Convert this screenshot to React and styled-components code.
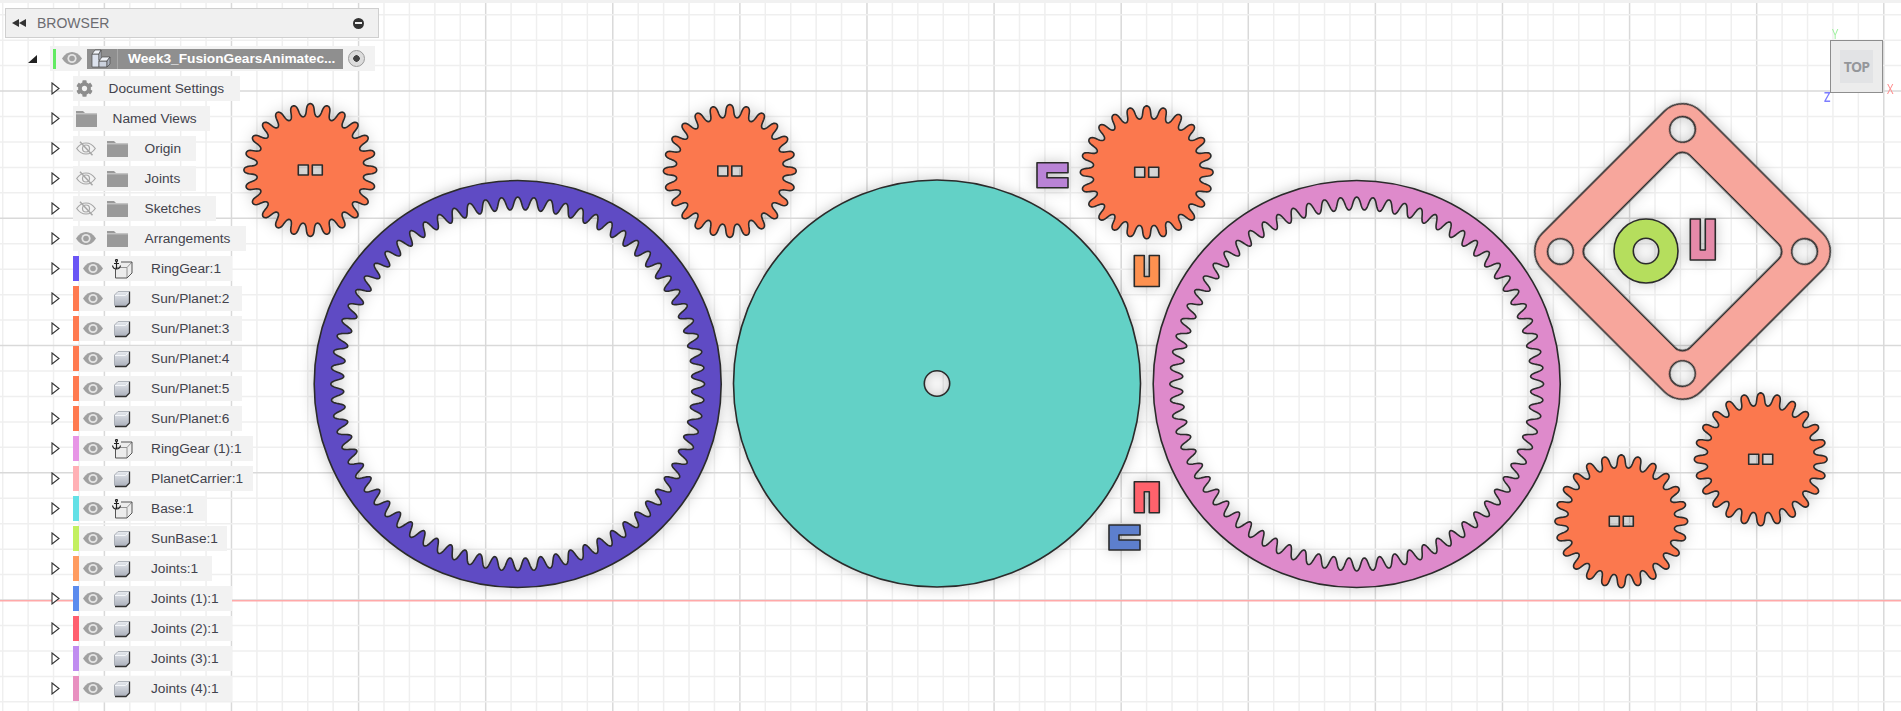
import React from "react";
import styled, { createGlobalStyle } from "styled-components";
import { FaCog } from "react-icons/fa";

const GlobalStyle = createGlobalStyle`
  html, body {
    margin: 0;
    padding: 0;
    background: #fff;
    overflow: hidden;
  }
`;

// tooth outline in polar coords, the warp makes the flanks steeper than a plain sine
function teethPath(cx, cy, mid, amp, teeth, warp = 0.55) {
  const pts = [];
  const steps = teeth * 24;
  for (let i = 0; i < steps; i++) {
    const phi = (i / steps) * Math.PI * 2 * teeth;
    const theta = (phi + warp * Math.sin(2 * phi) * 0.5) / teeth - Math.PI / 2;
    const r = mid + amp * Math.cos(phi);
    pts.push(`${(cx + r * Math.cos(theta)).toFixed(2)} ${(cy + r * Math.sin(theta)).toFixed(2)}`);
  }
  return `M${pts.join("L")}Z`;
}

const circlePath = (cx, cy, r) =>
  `M${cx - r} ${cy}A${r} ${r} 0 1 0 ${cx + r} ${cy}A${r} ${r} 0 1 0 ${cx - r} ${cy}Z`;

const rectPath = (x, y, w, h) => `M${x} ${y}H${x + w}V${y + h}H${x}Z`;

const roundSquare = (h, r) =>
  `M${-h + r} ${-h}H${h - r}A${r} ${r} 0 0 1 ${h} ${-h + r}V${h - r}A${r} ${r} 0 0 1 ${h - r} ${h}H${-h + r}A${r} ${r} 0 0 1 ${-h} ${h - r}V${-h + r}A${r} ${r} 0 0 1 ${-h + r} ${-h}Z`;

const gearPath = (cx, cy) =>
  teethPath(cx, cy, 60, 6.4, 24) +
  rectPath(cx - 12, cy - 5, 10, 10) +
  rectPath(cx + 2, cy - 5, 10, 10);

const ringPath = (cx, cy) =>
  circlePath(cx, cy, 203.5) + teethPath(cx, cy, 180.5, 6.4, 72, 0.2);

const GEARS = [
  [310.3, 170],
  [729.8, 171],
  [1146.7, 172.3],
  [1621.3, 521.3],
  [1760.7, 459.3],
];

// slot: up = open on top, down = open below, right = open on the right
const CLIPS = [
  { x: 1037, y: 162.7, w: 31, h: 25, depth: 21, open: "right", color: "#b983d6" },
  { x: 1109, y: 525, w: 31, h: 25, depth: 21, open: "right", color: "#5d7fcd" },
  { x: 1134.3, y: 255.5, w: 25, h: 31, depth: 21, open: "up", color: "#fd9150" },
  { x: 1134.3, y: 481.7, w: 25, h: 31, depth: 21, open: "down", color: "#ff626c" },
  { x: 1690.3, y: 219, w: 25, h: 41, depth: 31, open: "up", color: "#e58aa9" },
];

function clipPath({ x, y, w, h, depth, open }) {
  const s = 2.5;
  if (open === "right") {
    const m = y + h / 2;
    return `M${x} ${y}H${x + w}V${m - s}H${x + w - depth}V${m + s}H${x + w}V${y + h}H${x}Z`;
  }
  const m = x + w / 2;
  if (open === "up") {
    return `M${x} ${y}H${m - s}V${y + depth}H${m + s}V${y}H${x + w}V${y + h}H${x}Z`;
  }
  return `M${x} ${y}H${x + w}V${y + h}H${m + s}V${y + h - depth}H${m - s}V${y + h}H${x}Z`;
}

const range = (start, step, end) => {
  const out = [];
  for (let v = start; v < end; v += step) out.push(v);
  return out;
};

const TREE = [
  { kind: "gear", label: "Document Settings", end: 240, $left: 15 },
  { kind: "folder", label: "Named Views", end: 210, $left: 17 },
  { kind: "hidden", label: "Origin", end: 196 },
  { kind: "hidden", label: "Joints", end: 196 },
  { kind: "hidden", label: "Sketches", end: 216 },
  { kind: "shown", label: "Arrangements", end: 246 },
  { kind: "part", anchored: true, label: "RingGear:1", end: 232, color: "#6a55f5" },
  { kind: "part", label: "Sun/Planet:2", end: 242, color: "#ff7a50" },
  { kind: "part", label: "Sun/Planet:3", end: 242, color: "#ff7a50" },
  { kind: "part", label: "Sun/Planet:4", end: 242, color: "#ff7a50" },
  { kind: "part", label: "Sun/Planet:5", end: 242, color: "#ff7a50" },
  { kind: "part", label: "Sun/Planet:6", end: 242, color: "#ff7a50" },
  { kind: "part", anchored: true, label: "RingGear (1):1", end: 252.7, color: "#e795e6" },
  { kind: "part", label: "PlanetCarrier:1", end: 252.7, color: "#ffb0b5" },
  { kind: "part", anchored: true, label: "Base:1", end: 207, color: "#63e0e6" },
  { kind: "part", label: "SunBase:1", end: 227, color: "#c3f060" },
  { kind: "part", label: "Joints:1", end: 212, color: "#ff9c60" },
  { kind: "part", label: "Joints (1):1", end: 232, color: "#5b8bee" },
  { kind: "part", label: "Joints (2):1", end: 232, color: "#ff5f6f" },
  { kind: "part", label: "Joints (3):1", end: 232, color: "#c08cf0" },
  { kind: "part", label: "Joints (4):1", end: 232, color: "#e890c0" },
];

function Eye() {
  return (
    <svg width="20" height="13" viewBox="0 0 20 13">
      <path d="M0 6.5C3 2 6.3 0 10 0s7 2 10 6.5C17 11 13.7 13 10 13S3 11 0 6.5Z" fill="#a0a0a0" />
      <circle cx="10" cy="6.5" r="4.6" fill="#e4e4e4" />
      <circle cx="10" cy="6.5" r="2.8" fill="#a0a0a0" />
    </svg>
  );
}

function EyeOff() {
  return (
    <svg width="20" height="15" viewBox="0 0 20 15" fill="none" stroke="#a6a6a6" strokeWidth="1.2">
      <path d="M.7 7.5C3.5 3.5 6.5 2 10 2s6.5 1.5 9.3 5.5C16.5 11.5 13.5 13 10 13S3.5 11.5.7 7.5Z" />
      <circle cx="10" cy="7.5" r="3.5" />
      <path d="M4 .8l12.5 13.5" strokeWidth="1.5" />
    </svg>
  );
}

function Folder() {
  return (
    <svg width="21" height="16" viewBox="0 0 21 16">
      <path d="M0 0h7l2 2h12v14H0Z" fill="#9a9a9a" />
      <path d="M0 2.8h21" stroke="#f2f2f2" strokeWidth=".7" />
    </svg>
  );
}

function Cube() {
  return (
    <svg width="18" height="18" viewBox="0 0 18 18">
      <defs>
        <linearGradient id="cubeFace" x1="0" y1="0" x2="0" y2="1">
          <stop offset="0" stopColor="#e6e9ee" />
          <stop offset="1" stopColor="#a9aeb9" />
        </linearGradient>
      </defs>
      <path d="M1.5 5 5 1.5h11.5v11l-3.5 4H2.5l-1-1Z" fill="url(#cubeFace)" />
      <path d="M1.5 5.5h11l4-4" fill="none" stroke="#f4f6f9" strokeWidth="1" />
      <path d="M2 16.5h11l3.5-3.5V1.5" fill="none" stroke="#333" strokeWidth="1.3" />
      <path d="M1.5 15.5V5L5 1.5h11.5" fill="none" stroke="#9da2ab" strokeWidth=".8" />
    </svg>
  );
}

function AnchoredCube() {
  return (
    <svg width="21" height="20" viewBox="0 0 21 20">
      <path d="M3.5 8.5 9 3h11v11l-5 5H3.5Z" fill="#ececec" />
      <path d="M3.5 8.5H15V19M15 8.5 20 3" fill="none" stroke="#8a8a8a" strokeWidth=".9" />
      <path d="M3.5 10v9H15l5-5V3H9" fill="none" stroke="#555" strokeWidth="1" />
      <g fill="none" stroke="#222" strokeWidth="1.2">
        <circle cx="4.5" cy="1.5" r="1" />
        <path d="M4.5 2.5V10M2 4.5h5M.5 6.5C1 9 3 10 4.5 10S8 9 8.5 6.5" />
      </g>
    </svg>
  );
}

function RootCube() {
  return (
    <svg width="20" height="19" viewBox="0 0 20 19" stroke="#4a4a4a" strokeWidth=".7" strokeLinejoin="round">
      <path d="M1 5h7v13H1Z" fill="#dde3ee" />
      <path d="M1 5l3-4h6L8 5Z" fill="#f0f3f8" />
      <path d="M8 5l2-4v10H8Z" fill="#c4cad6" />
      <path d="M8 12h8v6H8Z" fill="#ccd2de" />
      <path d="M8 12l3-4h8l-3 4Z" fill="#f0f3f8" />
      <path d="M16 12l3-4v7l-3 3Z" fill="#aab0bc" />
    </svg>
  );
}

function Caret() {
  return (
    <CaretSlot>
      <svg width="9" height="13" viewBox="0 0 9 13">
        <path d="M1 1l7 5.5-7 5.5Z" fill="#fff" stroke="#333" strokeWidth="1.1" />
      </svg>
    </CaretSlot>
  );
}

function TreeRow({ item }) {
  const { kind, label, end, color, anchored, $left } = item;

  if (kind === "gear" || kind === "folder") {
    return (
      <Row>
        <Caret />
        <Cell $width={end - 73}>
          <Slot $width={kind === "gear" ? 23 : 27}>
            {kind === "gear" ? <FaCog size={17} color="#8d8d8d" /> : <Folder />}
          </Slot>
          <Label $left={$left - (kind === "gear" ? 2 : 4)}>{label}</Label>
        </Cell>
      </Row>
    );
  }

  if (kind === "hidden" || kind === "shown") {
    return (
      <Row>
        <Caret />
        <Cell $width={end - 73}>
          <Slot $width={27}>{kind === "hidden" ? <EyeOff /> : <Eye />}</Slot>
          <Slot $width={35}>
            <Folder />
          </Slot>
          <Label $left={10}>{label}</Label>
        </Cell>
      </Row>
    );
  }

  return (
    <Row>
      <Caret />
      <Swatch $color={color} />
      <Cell $width={end - 78.5}>
        <Slot $width={28}>
          <Eye />
        </Slot>
        <Slot $width={31}>{anchored ? <AnchoredCube /> : <Cube />}</Slot>
        <Label $left={13.5}>{label}</Label>
      </Cell>
    </Row>
  );
}

export default function App() {
  return (
    <Page>
      <GlobalStyle />
      <Viewport>
        <TopEdge />
        <svg width="1901" height="708" viewBox="0 3 1901 708" style={{ display: "block" }}>
          {range(2.7, 25.42, 1901).map((x, i) => (
            <GridLine key={x} x1={x} x2={x} y1="3" y2="711" $major={i % 5 === 4} />
          ))}
          {range(14.7, 25.45, 711).map((y, i) => (
            <GridLine key={y} y1={y} y2={y} x1="0" x2="1901" $major={i % 5 === 3} />
          ))}
          <AxisLine x1="0" x2="1901" y1="600.7" y2="600.7" />

          <Part $fill="#5f4bc4" d={ringPath(517.7, 384)} />
          <Part $fill="#63d1c6" d={circlePath(937, 383.5, 203.5) + circlePath(937, 383.5, 12.7)} />
          <Part $fill="#de8acb" d={ringPath(1356.7, 384)} />

          {GEARS.map(([x, y]) => (
            <Part key={x} $fill="#fb784e" d={gearPath(x, y)} />
          ))}

          <g transform="translate(1682.5 251.5)">
            <Part
              $fill="#f7a69c"
              transform="rotate(45)"
              d={
                roundSquare(112, 25.6) +
                roundSquare(73.3, 10.8) +
                [[-86.3, -86.3], [86.3, -86.3], [86.3, 86.3], [-86.3, 86.3]]
                  .map(([x, y]) => circlePath(x, y, 12.8))
                  .join("")
              }
            />
          </g>
          <Part $fill="#b5de5d" d={circlePath(1646, 251, 32) + circlePath(1646, 251, 12.7)} />

          {CLIPS.map((c) => (
            <Part key={c.color} $fill={c.color} d={clipPath(c)} />
          ))}
        </svg>

        <ViewCube>
          <Face>TOP</Face>
          <AxisY>Y</AxisY>
          <AxisX>X</AxisX>
          <AxisZ>Z</AxisZ>
        </ViewCube>
      </Viewport>

      <BrowserPanel>
        <Header>
          <svg width="14" height="8" viewBox="0 0 14 8">
            <path d="M7 0v8L0 4ZM14 0v8L7 4Z" fill="#333" />
          </svg>
          <HeaderTitle>BROWSER</HeaderTitle>
          <Collapse />
        </Header>

        <Tree>
          <RootRow>
            <RootCaret>
              <svg width="9" height="8" viewBox="0 0 9 8">
                <path d="M0 8 9 0v8Z" fill="#222" />
              </svg>
            </RootCaret>
            <RootCell>
              <RootBar />
              <Slot $width={31}>
                <Eye />
              </Slot>
              <RootIcon>
                <RootCube />
              </RootIcon>
              <RootName>Week3_FusionGearsAnimatec...</RootName>
              <Radio />
            </RootCell>
          </RootRow>
          {TREE.map((item) => (
            <TreeRow key={item.label} item={item} />
          ))}
        </Tree>
      </BrowserPanel>
    </Page>
  );
}

const Page = styled.div`
  position: relative;
  width: 1901px;
  height: 711px;
  overflow: hidden;
  background: #fff;
  font-family: "Liberation Sans", Arial, sans-serif;
`;

const Viewport = styled.div`
  width: 1901px;
  height: 711px;
`;

const TopEdge = styled.div`
  height: 3px;
  background: #f1f1f1;
`;

const GridLine = styled.line`
  stroke: ${(p) => (p.$major ? "#d9d9d9" : "#efefef")};
  stroke-width: 1.5;
`;

const AxisLine = styled.line`
  stroke: #ffa9a9;
  stroke-width: 1.6;
`;

const Part = styled.path`
  fill: ${(p) => p.$fill};
  fill-rule: evenodd;
  stroke: #2b2b2b;
  stroke-width: 1.6;
  stroke-linejoin: round;
  filter: drop-shadow(0 0 7px rgba(0, 0, 0, 0.22));
`;

const ViewCube = styled.div`
  position: absolute;
  left: 1830px;
  top: 40px;
  width: 51px;
  height: 51px;
  display: flex;
  align-items: center;
  justify-content: center;
  border: 1px solid #8e8e8e;
  background: #ececec;
`;

const Face = styled.div`
  width: 33px;
  height: 33px;
  display: flex;
  align-items: center;
  justify-content: center;
  background: #e2e3e5;
  color: #94969a;
  font-family: "Open Sans", sans-serif;
  font-size: 14px;
  font-weight: 700;
  letter-spacing: -0.8px;
`;

const AxisLetter = styled.span`
  position: absolute;
  font-family: "Open Sans", sans-serif;
  font-size: 15px;
  line-height: 12px;
  transform: scaleX(0.75);
`;

const AxisY = styled(AxisLetter)`
  left: 0;
  top: -14px;
  color: #9df09d;
`;

const AxisX = styled(AxisLetter)`
  left: 55px;
  top: 41px;
  color: #ff8a8a;
`;

const AxisZ = styled(AxisLetter)`
  left: -8px;
  top: 49px;
  color: #7d7dff;
  font-weight: 600;
`;

const BrowserPanel = styled.div`
  position: absolute;
  left: 5px;
  top: 8px;
  width: 374px;
`;

const Header = styled.div`
  box-sizing: border-box;
  height: 30px;
  display: flex;
  align-items: center;
  padding: 0 14px 0 6px;
  background: #f0f0f0;
  border: 1px solid #cfcfcf;
`;

const HeaderTitle = styled.span`
  margin-left: 11px;
  flex: 1;
  font-size: 14px;
  color: #6c6c70;
`;

const Collapse = styled.span`
  position: relative;
  width: 11px;
  height: 11px;
  border-radius: 50%;
  background: #333;

  &::after {
    content: "";
    position: absolute;
    left: 2px;
    right: 2px;
    top: 4.5px;
    height: 2px;
    background: #f0f0f0;
  }
`;

const Tree = styled.div`
  display: flex;
  flex-direction: column;
  gap: 5px;
  margin-top: 8px;
`;

const RootRow = styled.div`
  display: flex;
  align-items: center;
  height: 25px;
`;

const RootCaret = styled.div`
  width: 45px;
  padding-left: 23px;
  box-sizing: border-box;
  display: flex;
  align-items: center;
`;

const RootCell = styled.div`
  box-sizing: border-box;
  width: 325px;
  height: 25px;
  display: flex;
  align-items: center;
  padding-left: 3px;
  background: #f2f2f2;
`;

const RootBar = styled.span`
  width: 3px;
  height: 20px;
  background: #62ea62;
`;

const RootIcon = styled.span`
  width: 31px;
  height: 20px;
  display: flex;
  align-items: center;
  padding-left: 4px;
  box-sizing: border-box;
  background: #8f8f8f;
  border-right: 1px solid #a8a8a8;
`;

const RootName = styled.span`
  box-sizing: border-box;
  width: 225px;
  height: 20px;
  padding-left: 10px;
  line-height: 20px;
  background: #8f8f8f;
  color: #fff;
  font-size: 13.7px;
  font-weight: 700;
  white-space: nowrap;
  overflow: hidden;
`;

const Radio = styled.span`
  box-sizing: border-box;
  width: 17px;
  height: 17px;
  margin-left: 5px;
  border-radius: 50%;
  border: 1px solid #9a9a9a;
  background: radial-gradient(circle, #444 0 3px, #dcdcdc 3.5px);
`;

const Row = styled.div`
  display: flex;
  align-items: center;
  height: 25px;
`;

const CaretSlot = styled.div`
  width: 67.5px;
  padding-left: 46px;
  box-sizing: border-box;
  display: flex;
  align-items: center;
`;

const Swatch = styled.span`
  width: 6px;
  height: 25px;
  background: ${(p) => p.$color};
`;

const Cell = styled.div`
  width: ${(p) => p.$width}px;
  height: 25px;
  display: flex;
  align-items: center;
  background: #f2f2f2;
`;

const Slot = styled.span`
  flex: none;
  width: ${(p) => p.$width}px;
  display: flex;
  align-items: center;
  justify-content: center;
`;

const Label = styled.span`
  margin-left: ${(p) => p.$left}px;
  font-size: 13.7px;
  color: #42424c;
  white-space: nowrap;
`;
